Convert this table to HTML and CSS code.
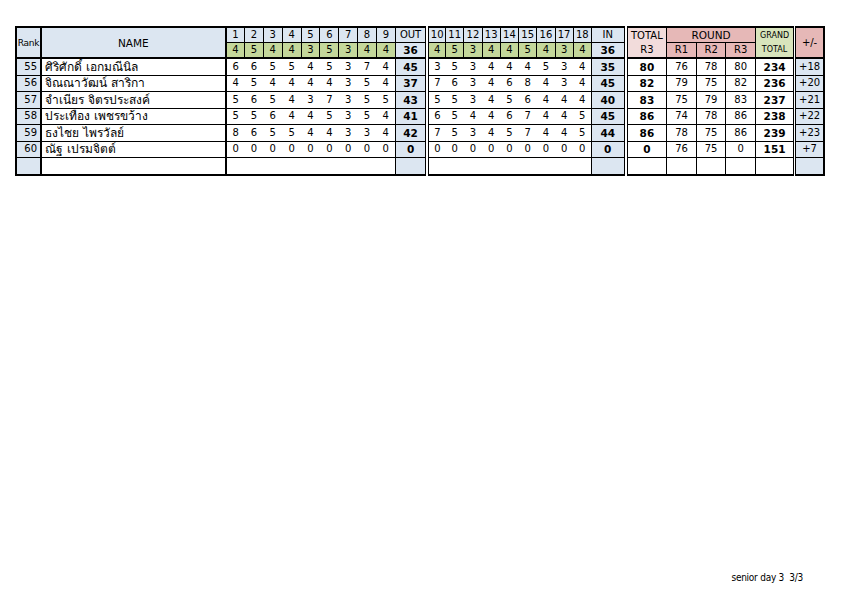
FILE: index.html
```html
<!DOCTYPE html>
<html lang="th">
<head>
<meta charset="utf-8">
<title>senior day 3</title>
<link rel="stylesheet" href="styles.css">
</head>
<body>
<div class="page">
<table class="score">
<colgroup>
<col class="c-rank"><col class="c-name">
<col class="c-h"><col class="c-h"><col class="c-h"><col class="c-h"><col class="c-h"><col class="c-h"><col class="c-h"><col class="c-h"><col class="c-h">
<col class="c-out">
<col class="c-h2"><col class="c-h2"><col class="c-h2"><col class="c-h2"><col class="c-h2"><col class="c-h2"><col class="c-h2"><col class="c-h2"><col class="c-h2">
<col class="c-in">
<col class="c-tot"><col class="c-r"><col class="c-r"><col class="c-r"><col class="c-grand"><col class="c-pm">
</colgroup>
<thead>
<tr class="hrow">
<th class="rk hd-blue rank-lbl" rowspan="2">Rank</th>
<th class="nm hd-blue name-lbl" rowspan="2">NAME</th>
<th class="hn first">1</th><th class="hn">2</th><th class="hn">3</th><th class="hn">4</th><th class="hn">5</th><th class="hn">6</th><th class="hn">7</th><th class="hn">8</th><th class="hn">9</th>
<th class="hn sum">OUT</th>
<th class="hn dbl">10</th><th class="hn">11</th><th class="hn">12</th><th class="hn">13</th><th class="hn">14</th><th class="hn">15</th><th class="hn">16</th><th class="hn">17</th><th class="hn">18</th>
<th class="hn sum">IN</th>
<th class="tot-hd dbl" rowspan="2">TOTAL<br>R3</th>
<th class="round-hd" colspan="3">ROUND</th>
<th class="grand-hd" rowspan="2">GRAND<br>TOTAL</th>
<th class="pm-hd pmb" rowspan="2">+/-</th>
</tr>
<tr class="hrow par">
<th class="pr first">4</th><th class="pr">5</th><th class="pr">4</th><th class="pr">4</th><th class="pr">3</th><th class="pr">5</th><th class="pr">3</th><th class="pr">4</th><th class="pr">4</th>
<th class="pr psum">36</th>
<th class="pr dbl">4</th><th class="pr">5</th><th class="pr">3</th><th class="pr">4</th><th class="pr">4</th><th class="pr">5</th><th class="pr">4</th><th class="pr">3</th><th class="pr">4</th>
<th class="pr psum">36</th>
<th class="rd">R1</th><th class="rd">R2</th><th class="rd">R3</th>
</tr>
</thead>
<tbody>
<tr>
<td class="rk">55</td><td class="nm">ศิริศักดิ์ เอกมณีนิล</td>
<td class="h first">6</td><td class="h">6</td><td class="h">5</td><td class="h">5</td><td class="h">4</td><td class="h">5</td><td class="h">3</td><td class="h">7</td><td class="h">4</td>
<td class="sum b">45</td>
<td class="h dbl">3</td><td class="h">5</td><td class="h">3</td><td class="h">4</td><td class="h">4</td><td class="h">4</td><td class="h">5</td><td class="h">3</td><td class="h">4</td>
<td class="sum b">35</td>
<td class="dbl b">80</td><td>76</td><td>78</td><td>80</td><td class="b">234</td><td class="pm pmb">+18</td>
</tr>
<tr>
<td class="rk">56</td><td class="nm">จิณณาวัฒน์ สาริกา</td>
<td class="h first">4</td><td class="h">5</td><td class="h">4</td><td class="h">4</td><td class="h">4</td><td class="h">4</td><td class="h">3</td><td class="h">5</td><td class="h">4</td>
<td class="sum b">37</td>
<td class="h dbl">7</td><td class="h">6</td><td class="h">3</td><td class="h">4</td><td class="h">6</td><td class="h">8</td><td class="h">4</td><td class="h">3</td><td class="h">4</td>
<td class="sum b">45</td>
<td class="dbl b">82</td><td>79</td><td>75</td><td>82</td><td class="b">236</td><td class="pm pmb">+20</td>
</tr>
<tr>
<td class="rk">57</td><td class="nm">จำเนียร จิตรประสงค์</td>
<td class="h first">5</td><td class="h">6</td><td class="h">5</td><td class="h">4</td><td class="h">3</td><td class="h">7</td><td class="h">3</td><td class="h">5</td><td class="h">5</td>
<td class="sum b">43</td>
<td class="h dbl">5</td><td class="h">5</td><td class="h">3</td><td class="h">4</td><td class="h">5</td><td class="h">6</td><td class="h">4</td><td class="h">4</td><td class="h">4</td>
<td class="sum b">40</td>
<td class="dbl b">83</td><td>75</td><td>79</td><td>83</td><td class="b">237</td><td class="pm pmb">+21</td>
</tr>
<tr>
<td class="rk">58</td><td class="nm">ประเทือง เพชรขว้าง</td>
<td class="h first">5</td><td class="h">5</td><td class="h">6</td><td class="h">4</td><td class="h">4</td><td class="h">5</td><td class="h">3</td><td class="h">5</td><td class="h">4</td>
<td class="sum b">41</td>
<td class="h dbl">6</td><td class="h">5</td><td class="h">4</td><td class="h">4</td><td class="h">6</td><td class="h">7</td><td class="h">4</td><td class="h">4</td><td class="h">5</td>
<td class="sum b">45</td>
<td class="dbl b">86</td><td>74</td><td>78</td><td>86</td><td class="b">238</td><td class="pm pmb">+22</td>
</tr>
<tr>
<td class="rk">59</td><td class="nm">ธงไชย ไพรวัลย์</td>
<td class="h first">8</td><td class="h">6</td><td class="h">5</td><td class="h">5</td><td class="h">4</td><td class="h">4</td><td class="h">3</td><td class="h">3</td><td class="h">4</td>
<td class="sum b">42</td>
<td class="h dbl">7</td><td class="h">5</td><td class="h">3</td><td class="h">4</td><td class="h">5</td><td class="h">7</td><td class="h">4</td><td class="h">4</td><td class="h">5</td>
<td class="sum b">44</td>
<td class="dbl b">86</td><td>78</td><td>75</td><td>86</td><td class="b">239</td><td class="pm pmb">+23</td>
</tr>
<tr>
<td class="rk">60</td><td class="nm">ณัฐ เปรมจิตต์</td>
<td class="h first">0</td><td class="h">0</td><td class="h">0</td><td class="h">0</td><td class="h">0</td><td class="h">0</td><td class="h">0</td><td class="h">0</td><td class="h">0</td>
<td class="sum b">0</td>
<td class="h dbl">0</td><td class="h">0</td><td class="h">0</td><td class="h">0</td><td class="h">0</td><td class="h">0</td><td class="h">0</td><td class="h">0</td><td class="h">0</td>
<td class="sum b">0</td>
<td class="dbl b">0</td><td>76</td><td>75</td><td>0</td><td class="b">151</td><td class="pm pmb">+7</td>
</tr>
<tr>
<td class="rk"></td><td class="nm"></td>
<td class="h first"></td><td class="h"></td><td class="h"></td><td class="h"></td><td class="h"></td><td class="h"></td><td class="h"></td><td class="h"></td><td class="h"></td>
<td class="sum"></td>
<td class="h dbl"></td><td class="h"></td><td class="h"></td><td class="h"></td><td class="h"></td><td class="h"></td><td class="h"></td><td class="h"></td><td class="h"></td>
<td class="sum"></td>
<td class="dbl"></td><td></td><td></td><td></td><td></td><td class="pm pmb"></td>
</tr>
</tbody>
</table>
<div class="footer">senior day 3&nbsp;&nbsp;3/3</div>
</div>
</body>
</html>
```

FILE: styles.css
```css
html, body {
  margin: 0;
  padding: 0;
  background: #ffffff;
}

.page {
  width: 842px;
  height: 595px;
  display: flex;
  flex-direction: column;
  box-sizing: border-box;
  padding: 26px 0 0 15px;
}

.score {
  border-collapse: collapse;
  table-layout: fixed;
  width: 810px;
  border: 2px solid #000;
  font-family: "DejaVu Sans", "Noto Sans", sans-serif;
  font-size: 10px;
  color: #000;
}

.c-rank { width: 25px; }
.c-name { width: 184px; }
.c-h { width: 18.8px; }
.c-out { width: 32px; }
.c-h2 { width: 18.2px; }
.c-in { width: 34px; }
.c-tot { width: 41px; }
.c-r { width: 29.5px; }
.c-grand { width: 39px; }
.c-pm { width: 29px; }

.score th,
.score td {
  border: 1px solid #000;
  padding: 0;
  text-align: center;
  vertical-align: middle;
  font-weight: normal;
  white-space: nowrap;
  overflow: hidden;
  line-height: 12px;
}

.score .hrow th {
  height: 14px;
}

.score tbody td {
  height: 15.5px;
}

.score thead tr.par th {
  border-bottom: 2px solid #000;
}

.score th.hd-blue {
  background: #dce6f1;
  border-bottom: 2px solid #000;
}

.score th.rank-lbl {
  font-size: 9px;
  letter-spacing: -0.2px;
}

.score th.name-lbl {
  font-size: 10.5px;
}

.score .rk {
  border-right: 2px solid #000;
}

.score tbody td.rk {
  background: #dce6f1;
  text-align: right;
  padding-right: 3px;
}

.score .nm {
  border-right: 2px solid #000;
}

.score tbody td.nm {
  text-align: left;
  padding-left: 3px;
  font-size: 12px;
}

.score th.hn {
  background: #dce6f1;
}

.score th.pr {
  background: #c4d79b;
}

.score td.sum {
  background: #dce6f1;
}

.score th.psum {
  background: #dce6f1;
  font-weight: bold;
  font-size: 10.5px;
}

.score .dbl {
  border-left: 4px double #000;
}

.score .pmb {
  border-left: 3px double #000;
}

.score th.tot-hd {
  background: #f2dcdb;
  border-bottom: 2px solid #000;
  font-size: 10px;
  line-height: 14px;
}

.score th.round-hd {
  background: #e6b8b7;
  font-size: 10.5px;
}

.score th.rd {
  background: #e6b8b7;
}

.score th.grand-hd {
  background: #d8e4bc;
  font-size: 8px;
  line-height: 14px;
  border-bottom: 2px solid #000;
}

.score th.pm-hd {
  background: #e6b8b7;
  font-size: 10px;
  border-bottom: 2px solid #000;
}

.score tbody td.h {
  border-left: none;
  border-right: none;
}

.score tbody td.h.first {
  border-left: 2px solid #000;
}

.score tbody td.h.dbl {
  border-left: 4px double #000;
}

.score td.b {
  font-weight: bold;
  font-size: 10.5px;
}

.score td.pm {
  background: #dce6f1;
}

.footer {
  margin-top: auto;
  align-self: flex-end;
  margin-right: 39px;
  margin-bottom: 11px;
  font-family: "DejaVu Sans Condensed", "DejaVu Sans", sans-serif;
  font-size: 10px;
  letter-spacing: -0.25px;
  line-height: 12px;
  color: #000;
}
```
